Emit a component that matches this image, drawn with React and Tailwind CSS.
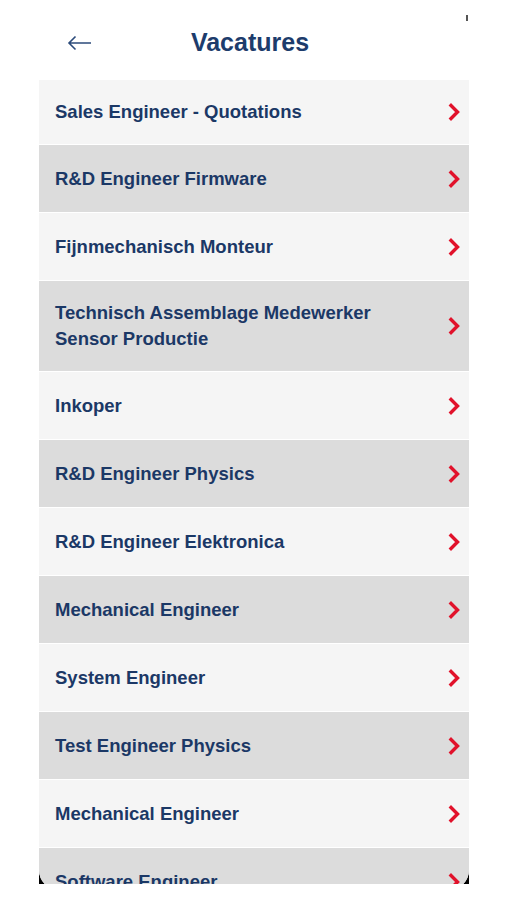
const jobs = [
  { title: "Sales Engineer - Quotations", h: "h-[64px]" },
  { title: "R&D Engineer Firmware" },
  { title: "Fijnmechanisch Monteur" },
  { title: ["Technisch Assemblage Medewerker", "Sensor Productie"], h: "h-[90px]" },
  { title: "Inkoper" },
  { title: "R&D Engineer Physics" },
  { title: "R&D Engineer Elektronica" },
  { title: "Mechanical Engineer" },
  { title: "System Engineer" },
  { title: "Test Engineer Physics" },
  { title: "Mechanical Engineer" },
  { title: "Software Engineer" },
];

const Chevron = () => (
  <svg width="12" height="18" viewBox="0 0 12 18" className="shrink-0">
    <polyline points="3,2.5 9.5,9 3,15.5" fill="none" stroke="#e1122b" strokeWidth="3.4" strokeLinecap="square" strokeLinejoin="miter" />
  </svg>
);

const App = () => {
  return (
    <div className="w-[507px] h-[900px] bg-white relative font-['Liberation_Sans',Arial,sans-serif]">
      <div className="absolute left-[466px] top-[15px] w-[2px] h-[6px] bg-[#555]" />
      <div className="h-[80px] ml-[39px] w-[430px] flex items-center relative">
        <button className="absolute left-[28px] top-[35px]">
          <svg width="26" height="16" viewBox="0 0 26 16">
            <path d="M24 8H2M8.5 1.5L2 8l6.5 6.5" fill="none" stroke="#2c4b7b" strokeWidth="1.6" />
          </svg>
        </button>
        <h1 className="w-full text-center text-[25px] font-bold text-[#1d3c6c] pt-[5px] pr-[8px]">Vacatures</h1>
      </div>
      <div className="ml-[39px] w-[430px] h-[804px] overflow-hidden bg-black">
        <div className="h-[810px] bg-white rounded-b-[20px] overflow-hidden flex flex-col gap-px">
          {jobs.map((job, i) => (
            <div
              key={i}
              className={`${job.h || "h-[67px]"} shrink-0 flex items-center justify-between pl-[16px] pr-[9px] ${i % 2 === 0 ? "bg-[#f5f5f5]" : "bg-[#dcdcdc]"}`}
            >
              <div className="text-[18.5px] leading-[26px] font-bold text-[#1b3866]">
                {Array.isArray(job.title) ? job.title.map((t) => <div key={t}>{t}</div>) : job.title}
              </div>
              <Chevron />
            </div>
          ))}
        </div>
      </div>
    </div>
  );
};

export default App;
